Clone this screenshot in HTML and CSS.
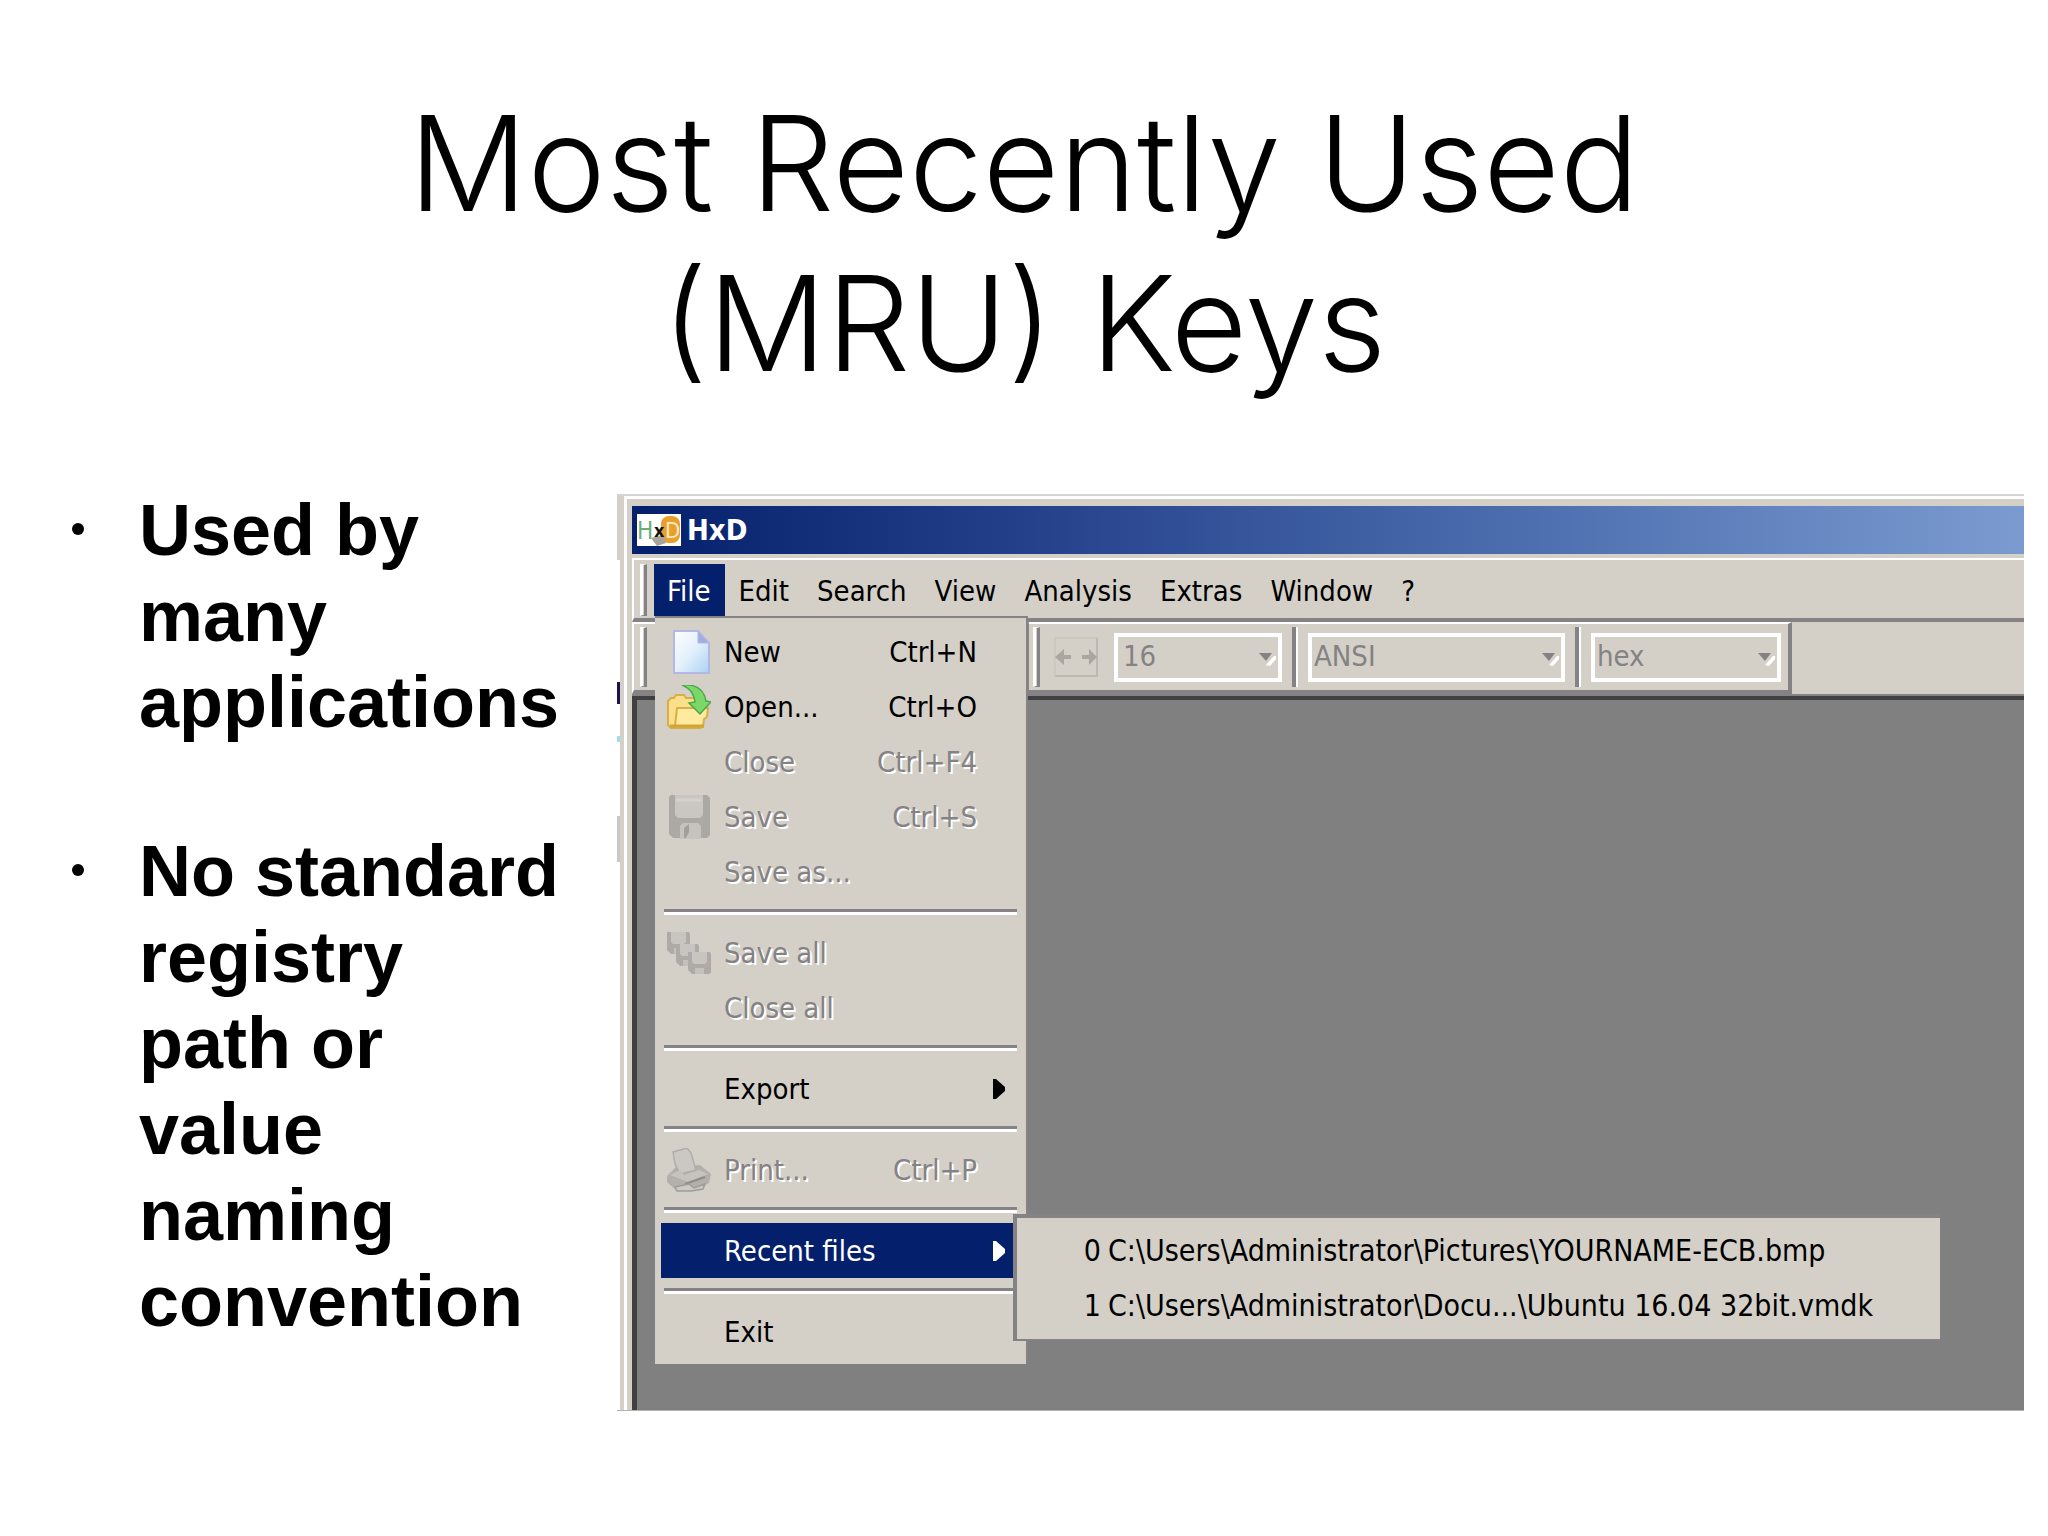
FILE: index.html
```html
<!DOCTYPE html>
<html lang="en">
<head>
<meta charset="UTF-8">
<meta name="viewport" content="width=device-width, initial-scale=1.0">
<title>Most Recently Used (MRU) Keys</title>
<link rel="stylesheet" href="styles.css">
</head>
<body>
<h1>Most Recently Used<br>(MRU) Keys</h1>

<main class="content">
    <ul class="points">
        <li><span>Used by many applications</span></li>
        <li><span>No standard registry path or value naming convention</span></li>
    </ul>

    <div class="shot">
        <div class="edge"></div>
        <div class="window">
            <div class="titlebar">
                <svg class="logo" viewBox="0 0 44 32" aria-hidden="true">
                    <rect width="44" height="32" fill="#fff"/>
                    <rect x="24" y="2" width="19" height="27" rx="8" fill="#e8a02c"/>
                    <path d="M14 24l12-3 3 8-9 3z" fill="#a8a49c"/>
                    <text x="0" y="25" font-size="24" fill="#6cae72">H</text>
                    <text x="28" y="24" font-size="22" fill="#fbe9c4">D</text>
                    <text x="17" y="23" font-size="18" font-weight="bold" fill="#111">x</text>
                </svg>
                <span>HxD</span>
            </div>

            <nav class="menubar">
                <span class="grip"></span>
                <ul class="menus">
                    <li class="open">
                        <button type="button">File</button>
                        <ul class="popup">
                            <li><button type="button">
                                <svg viewBox="0 0 44 44" aria-hidden="true">
                                    <defs><linearGradient id="paper" x1="0" y1="0" x2="1" y2="1"><stop offset="0" stop-color="#fdfeff"/><stop offset=".5" stop-color="#e4f0fb"/><stop offset="1" stop-color="#a9d2f5"/></linearGradient></defs>
                                    <path d="M7 1h24l11 12v30H7z" fill="url(#paper)" stroke="#b4b8e4" stroke-width="2"/>
                                    <path d="M31 1v12h11z" fill="#a3ace0" stroke="#b4b8e4" stroke-width="1"/>
                                </svg>
                                <span>New</span><kbd>Ctrl+N</kbd></button></li>
                            <li><button type="button">
                                <svg viewBox="0 0 44 44" aria-hidden="true">
                                    <path d="M1 40V16l3-3h3l2-3h8l2 3h11l3 3v24l-3 3H4z" fill="#fbe08c" stroke="#d9ae45" stroke-width="2"/>
                                    <path d="M8 41l2-18h31l-1 9-3 2-1 8-3 1H4z" fill="#ffeaa0" stroke="#d9ae45" stroke-width="2"/>
                                    <path d="M3 41h34" stroke="#d3a335" stroke-width="3"/>
                                    <path d="M15 0c13-1 22 4 24 16l5 1-11 12-11-11 6-1C27 9 24 4 15 0z" fill="#7bd868" stroke="#4aa848" stroke-width="1.5"/>
                                </svg>
                                <span>Open...</span><kbd>Ctrl+O</kbd></button></li>
                            <li><button type="button" disabled><i></i><span>Close</span><kbd>Ctrl+F4</kbd></button></li>
                            <li><button type="button" disabled>
                                <svg viewBox="0 0 44 44" aria-hidden="true">
                                    <path d="M2 2l2-2h36l3 3v37l-3 3H6l-4-4z" fill="#aca8a4"/>
                                    <path d="M8 0h28v20l-3 3H11l-3-3z" fill="#cac6c1"/>
                                    <path d="M9 5h26" stroke="#d4d0ca" stroke-width="3"/>
                                    <path d="M13 44V31l3-3h15l3 3v13z" fill="#c6c2bd"/>
                                    <path d="M17 43V33l5-4v8l-3 6z" fill="#a39f9b"/>
                                </svg>
                                <span>Save</span><kbd>Ctrl+S</kbd></button></li>
                            <li><button type="button" disabled><i></i><span>Save as...</span></button></li>
                            <li class="line"></li>
                            <li><button type="button" disabled>
                                <svg viewBox="0 0 44 44" aria-hidden="true">
                                    <g id="disk">
                                        <path d="M0 1h22l1 2v19l-2 1H4l-4-4z" fill="#aeaaa6"/>
                                        <path d="M4 1h15v10l-2 2H6l-2-2z" fill="#c8c4bf"/>
                                        <path d="M7 23v-6h9v6z" fill="#c4c0bb"/>
                                    </g>
                                    <use href="#disk" x="9" y="12"/>
                                    <use href="#disk" x="21" y="20"/>
                                </svg>
                                <span>Save all</span></button></li>
                            <li><button type="button" disabled><i></i><span>Close all</span></button></li>
                            <li class="line"></li>
                            <li><button type="button"><i></i><span>Export</span>
                                <svg class="more" viewBox="0 0 12 20" aria-hidden="true"><path d="M0 0h3l9 8v4l-9 8H0z"/></svg></button></li>
                            <li class="line"></li>
                            <li><button type="button" disabled>
                                <svg viewBox="0 0 44 44" aria-hidden="true">
                                    <path d="M0 28l9-9 24-2 11 9-2 9-18 8H10L0 34z" fill="#b3afab"/>
                                    <path d="M6 4l14-4 4 5 5 17-16 4-5-10z" fill="#cbc7c2" stroke="#b0aca8" stroke-width="1.5"/>
                                    <path d="M3 27l10-5 4 5 15-5 9 4-20 8z" fill="#c6c2bd"/>
                                    <path d="M18 36l20-7" stroke="#8f8b88" stroke-width="2"/>
                                    <path d="M8 39l14-3 5 4 11-4-2 5-12 2H10z" fill="#cdc9c4" stroke="#a09c98" stroke-width="1.5"/>
                                </svg>
                                <span>Print...</span><kbd>Ctrl+P</kbd></button></li>
                            <li class="line"></li>
                            <li class="open"><button type="button"><i></i><span>Recent files</span>
                                <svg class="more" viewBox="0 0 12 20" aria-hidden="true"><path d="M0 0h3l9 8v4l-9 8H0z"/></svg></button>
                                <ul class="popup recent">
                                    <li><button type="button"><b>0</b>C:\Users\Administrator\Pictures\YOURNAME-ECB.bmp</button></li>
                                    <li><button type="button"><b>1</b>C:\Users\Administrator\Docu...\Ubuntu 16.04 32bit.vmdk</button></li>
                                </ul>
                            </li>
                            <li class="line"></li>
                            <li><button type="button"><i></i><span>Exit</span></button></li>
                        </ul>
                    </li>
                    <li><button type="button">Edit</button></li>
                    <li><button type="button">Search</button></li>
                    <li><button type="button">View</button></li>
                    <li><button type="button">Analysis</button></li>
                    <li><button type="button">Extras</button></li>
                    <li><button type="button">Window</button></li>
                    <li><button type="button">?</button></li>
                </ul>
            </nav>

            <div class="toolbars">
                <div class="toolbar files"><span class="grip"></span></div>
                <div class="toolbar">
                    <span class="grip"></span>
                    <button class="width-btn" type="button" aria-label="Bytes per row" disabled>
                        <svg viewBox="0 0 44 40" aria-hidden="true"><path d="M1 20l9-8v6h7v4h-7v6zM43 20l-8-8v6h-7v4h7v6z" fill="#aaa7a1"/></svg>
                    </button>
                    <div class="combo bytes">
                        <select aria-label="Bytes per row count" disabled><option>16</option></select>
                        <svg viewBox="0 0 18 14" aria-hidden="true"><path d="M8 13l8-9h2v3l-6 7z" fill="#fff"/><path d="M1 1h13L8 9z" fill="#848284"/></svg>
                    </div>
                    <span class="split"></span>
                    <div class="combo charset">
                        <select aria-label="Character set" disabled><option>ANSI</option></select>
                        <svg viewBox="0 0 18 14" aria-hidden="true"><path d="M8 13l8-9h2v3l-6 7z" fill="#fff"/><path d="M1 1h13L8 9z" fill="#848284"/></svg>
                    </div>
                    <span class="split"></span>
                    <div class="combo base">
                        <select aria-label="Offset base" disabled><option>hex</option></select>
                        <svg viewBox="0 0 18 14" aria-hidden="true"><path d="M8 13l8-9h2v3l-6 7z" fill="#fff"/><path d="M1 1h13L8 9z" fill="#848284"/></svg>
                    </div>
                </div>
            </div>

            <div class="workspace"></div>
        </div>
    </div>
</main>
</body>
</html>
```
FILE: styles.css
```css
* {
    box-sizing: border-box;
}

body {
    margin: 0;
    min-height: 100vh;
    padding: 83px 24px 125px 72px;
    display: flex;
    flex-direction: column;
    background: #fff;
    color: #000;
    font-family: "Liberation Sans", Arial, sans-serif;
}

h1 {
    margin: 0 48px 84px 0;
    font-family: Inter, "Helvetica Neue", sans-serif;
    font-size: 132px;
    font-weight: 300;
    line-height: 160px;
    text-align: center;
}

ul {
    list-style: none;
    margin: 0;
    padding: 0;
}

.content {
    flex: 1;
    display: grid;
    grid-template-columns: 500px 1fr;
    gap: 45px;
}

.points {
    font-size: 72px;
    font-weight: bold;
    line-height: 86px;
}

.points li {
    display: flex;
    gap: 55px;
}

.points li + li {
    margin-top: 83px;
}

.points li::before {
    content: "";
    flex: none;
    width: 12px;
    height: 12px;
    margin-top: 36px;
    border-radius: 50%;
    background: #000;
}

/* window frame */
.shot {
    display: flex;
    margin-top: 7px;
    border-top: 2px solid #d4d4d0;
    border-bottom: 1px solid #b4b2ae;
    font-family: "DejaVu Sans Condensed", "DejaVu Sans", Tahoma, sans-serif;
    font-size: 29px;
    line-height: 36px;
}

/* sliver of the window behind */
.edge {
    width: 3px;
    background: linear-gradient(#d4d0c8 64px, #fff 64px 186px, #1c1450 186px 208px, #fff 208px 240px, #9fdcf0 240px 246px, #fff 246px 320px, #c8c8c8 320px 366px, #fff 366px);
}

.window {
    flex: 1;
    display: flex;
    flex-direction: column;
    padding: 10px 0 0 5px;
    border-left: 4px solid #d4d0c8;
    background: #d4d0c8;
    box-shadow: inset 3px 3px #fff;
}

button,
select {
    border: 0;
    margin: 0;
    padding: 0;
    background: none;
    color: inherit;
    font: inherit;
    text-align: left;
}

.titlebar {
    display: flex;
    align-items: center;
    gap: 6px;
    height: 48px;
    margin-left: 3px;
    padding-left: 5px;
    background: linear-gradient(90deg, #04206c, #24408a 28%, #4b6dae 63%, #7b9bd0);
    color: #fff;
    font-weight: bold;
}

.logo {
    width: 44px;
    height: 32px;
    font-weight: normal;
}

.menubar {
    display: flex;
    align-items: stretch;
    margin: 4px 0 0 3px;
    padding: 4px 0 2px 6px;
    border-top: 2px solid #fff;
    border-left: 2px solid #fff;
    border-bottom: 4px solid #848284;
}

.grip {
    flex: none;
    width: 7px;
    border: solid;
    border-width: 1px 3px 1px 3px;
    border-color: #fff #848284 #848284 #fff;
}

.menus {
    display: flex;
    margin-left: 7px;
}

.menus > li {
    position: relative;
}

.menus > li > button {
    height: 52px;
    padding: 1px 15px 0 13px;
}

.menus .open > button {
    background: #04206c;
    color: #fff;
}

.popup {
    position: absolute;
    z-index: 1;
    top: 100%;
    left: 1px;
    width: 373px;
    padding: 6px 6px 5px;
    border-top: 2px solid #848284;
    border-right: 2px solid #848284;
    background: #d4d0c8;
}

.popup li {
    position: relative;
}

.popup button {
    display: flex;
    align-items: center;
    width: 100%;
    height: 55px;
    padding: 0 43px 0 6px;
    white-space: nowrap;
}

.popup button:disabled {
    color: #848284;
    text-shadow: 2px 2px #fff;
}

.popup i,
.popup button > svg:first-child {
    flex: none;
    width: 44px;
    height: 44px;
    margin-right: 13px;
}

.popup kbd {
    margin-left: auto;
    font: inherit;
}

.popup .more {
    width: 12px;
    height: 20px;
    margin: 0 -28px 0 auto;
    fill: currentColor;
}

.popup .line {
    height: 6px;
    margin: 10px 3px;
    border-top: 3px solid #848284;
    border-bottom: 3px solid #fff;
}

.popup .recent {
    top: -9px;
    left: 352px;
    width: 927px;
    border-width: 4px 0 2px 4px;
    border-style: solid;
    border-color: #848284;
    padding: 5px 6px 6px;
    font-size: 30px;
}

.recent button {
    padding-left: 60px;
}

.recent b {
    width: 18px;
    margin-right: 7px;
    font-weight: normal;
    text-align: right;
}

.toolbars {
    display: flex;
    margin-left: 3px;
    border-bottom: 2px solid #848284;
}

.toolbar {
    display: flex;
    align-items: center;
    height: 72px;
    padding: 3px 7px 3px 4px;
    border-top: 2px solid #fff;
    border-right: 4px solid #848284;
    border-bottom: 4px solid #848284;
}

.files {
    flex: none;
    width: 397px;
    padding-left: 6px;
    border-left: 2px solid #fff;
}

.toolbar .grip,
.split {
    align-self: stretch;
}

.width-btn {
    width: 44px;
    height: 40px;
    margin: 0 16px 0 14px;
    border: 2px solid;
    border-color: #cbc8c1 #bcb9b3 #bcb9b3 #cbc8c1;
}

.width-btn svg {
    display: block;
    margin: -2px;
    width: 44px;
    height: 40px;
}

.combo {
    position: relative;
    height: 49px;
    border: 4px solid #fff;
}

.combo select {
    appearance: none;
    width: 100%;
    height: 41px;
    padding: 0 0 2px 2px;
    color: #848284;
    opacity: 1;
}

.combo svg {
    position: absolute;
    right: 2px;
    top: 15px;
    width: 18px;
    height: 14px;
}

.bytes {
    width: 168px;
}

.bytes select {
    padding-left: 5px;
}

.charset {
    width: 257px;
}

.base {
    width: 190px;
}

.split {
    width: 6px;
    margin: 0 10px;
    border-left: 4px solid #848284;
    border-right: 2px solid #fff;
}

.workspace {
    flex: 1;
    margin-left: 3px;
    border-left: 5px solid #404040;
    border-top: 4px solid #404040;
    background: #808080;
}
```
